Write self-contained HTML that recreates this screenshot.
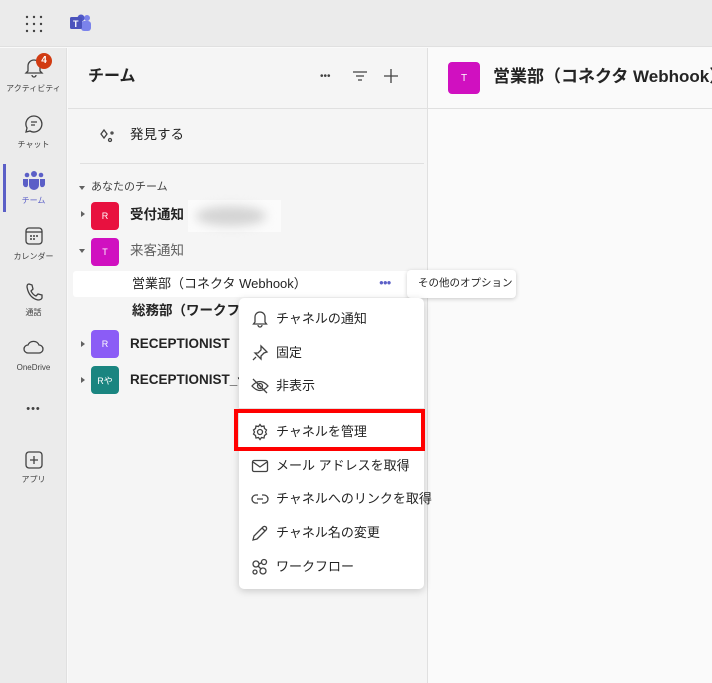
<!DOCTYPE html><html><head><meta charset="utf-8"><style>
*{margin:0;padding:0;box-sizing:border-box}
body{width:712px;height:683px;overflow:hidden;position:relative;background:#fafafa;font-family:"Liberation Sans","Noto Sans CJK JP",sans-serif;color:#242424}
.a{position:absolute}
.t{position:absolute;white-space:nowrap;line-height:1}
svg{position:absolute;fill:none;stroke:#424242;stroke-width:1.3}
.rl{font-size:8px;color:#424242;width:67px;text-align:center;left:0}
.av{position:absolute;width:28px;height:28px;border-radius:4px;color:#fff;font-size:9px;display:flex;align-items:center;justify-content:center;left:91px}
.tri{position:absolute;width:0;height:0}
.mi{position:absolute;left:276px;font-size:13px;white-space:nowrap;line-height:1;color:#242424}
</style></head><body>
<div class="a" style="left:0;top:0;width:712px;height:47px;background:#ebebeb;border-bottom:1px solid #e0e0e0"></div>
<svg style="left:25px;top:15px" width="18" height="18"><g fill="#424242" stroke="none"><circle cx="2" cy="2" r="1.2"/><circle cx="9" cy="2" r="1.2"/><circle cx="16" cy="2" r="1.2"/><circle cx="2" cy="9" r="1.2"/><circle cx="9" cy="9" r="1.2"/><circle cx="16" cy="9" r="1.2"/><circle cx="2" cy="16" r="1.2"/><circle cx="9" cy="16" r="1.2"/><circle cx="16" cy="16" r="1.2"/></g></svg>
<svg style="left:69px;top:14px" width="24" height="20"><g stroke="none"><circle cx="18" cy="4" r="3" fill="#7b83eb"/><rect x="12" y="7" width="10" height="10" rx="3" fill="#7b83eb"/><circle cx="12" cy="4" r="3.5" fill="#5059c9"/><rect x="1" y="3" width="12" height="12" rx="1.5" fill="#4b53bc"/></g><text x="4" y="13" font-size="9" fill="#fff" stroke="none" font-weight="bold" font-family="Liberation Sans">T</text></svg>
<!-- rail -->
<div class="a" style="left:0;top:48px;width:67px;height:635px;background:#ebebeb;border-right:1px solid #e0e0e0"></div>
<svg style="left:24px;top:58px" width="20" height="20"><path d="M4 13V8a6 6 0 0112 0v5l2 2H2z M8 17a2 2 0 004 0"/></svg>
<div class="a" style="left:36px;top:53px;width:16px;height:16px;border-radius:50%;background:#d13b12;color:#fff;font-size:10px;font-weight:bold;text-align:center;line-height:16px">4</div>
<div class="t rl" style="top:85px">アクティビティ</div>
<svg style="left:24px;top:114px" width="20" height="20"><path d="M10 2a8 8 0 11-4 15l-4 1 1-4A8 8 0 0110 2z M7 8h6 M7 11h4"/></svg>
<div class="t rl" style="top:141px">チャット</div>
<div class="a" style="left:3px;top:164px;width:3px;height:48px;background:#5b5fc7"></div>
<svg style="left:23px;top:170px" width="22" height="20"><g fill="#5b5fc7" stroke="none"><circle cx="11" cy="4" r="3"/><circle cx="4" cy="5" r="2.3"/><circle cx="18" cy="5" r="2.3"/><path d="M6 9h10v6a5 5 0 01-10 0z"/><path d="M0 9h5v6a3 3 0 01-1 2 3 3 0 01-4-3z"/><path d="M17 9h5v5a3 3 0 01-4 3 3 3 0 01-1-2z"/></g></svg>
<div class="t rl" style="top:197px;color:#5b5fc7">チーム</div>
<svg style="left:24px;top:226px" width="20" height="20"><rect x="2" y="2" width="16" height="16" rx="3"/><path d="M2 6h16"/><g fill="#424242" stroke="none"><circle cx="7" cy="10" r="1"/><circle cx="10" cy="10" r="1"/><circle cx="13" cy="10" r="1"/><circle cx="7" cy="13" r="1"/><circle cx="10" cy="13" r="1"/></g></svg>
<div class="t rl" style="top:253px">カレンダー</div>
<svg style="left:24px;top:282px" width="20" height="20"><path d="M5 2l3 1 1 4-2 2q2 4 5 5l2-2 4 1 0 3q-1 2-4 2Q5 16 3 5q0-3 2-3z"/></svg>
<div class="t rl" style="top:309px">通話</div>
<svg style="left:23px;top:338px" width="22" height="18"><path d="M5 15a4 4 0 010-8 6 6 0 0111 0 4 4 0 010 8z"/></svg>
<div class="t rl" style="top:364px">OneDrive</div>
<div class="t rl" style="top:404px;font-size:11px;letter-spacing:1px">•••</div>
<svg style="left:24px;top:450px" width="20" height="20"><rect x="2" y="2" width="16" height="16" rx="3"/><path d="M10 6v8M6 10h8"/></svg>
<div class="t rl" style="top:476px">アプリ</div>
<!-- team panel -->
<div class="a" style="left:68px;top:48px;width:360px;height:635px;background:#f5f5f5;border-right:1px solid #e0e0e0"></div>
<div class="t" style="left:88px;top:69px;font-size:16px;font-weight:bold">チーム</div>
<div class="t" style="left:320px;top:72px;font-size:10px;color:#424242">•••</div>
<svg style="left:352px;top:70px" width="16" height="12"><path d="M1 2h14M4 6h8M6 10h4"/></svg>
<svg style="left:383px;top:68px" width="16" height="16"><path d="M8 1v14M1 8h14"/></svg>
<div class="a" style="left:68px;top:108px;width:644px;height:1px;background:#e0e0e0"></div>
<svg style="left:99px;top:128px" width="16" height="16"><path d="M5 2l3 4-3 4-3-4z" /><circle cx="11" cy="12" r="1.5"/><circle cx="13" cy="5" r="1"/></svg>
<div class="t" style="left:130px;top:128px;font-size:13.5px">発見する</div>
<div class="a" style="left:80px;top:163px;width:344px;height:1px;background:#e0e0e0"></div>
<div class="tri" style="left:79px;top:186px;border-left:3px solid transparent;border-right:3px solid transparent;border-top:4px solid #616161"></div>
<div class="t" style="left:91px;top:182px;font-size:11px;color:#424242">あなたのチーム</div>
<div class="tri" style="left:81px;top:211px;border-top:3px solid transparent;border-bottom:3px solid transparent;border-left:4px solid #616161"></div>
<div class="av" style="top:202px;background:#e8113f">R</div>
<div class="t" style="left:130px;top:208px;font-size:13.5px;font-weight:bold">受付通知</div>
<div class="a" style="left:188px;top:200px;width:93px;height:32px;background:#fbfbfb"></div>
<div class="a" style="left:196px;top:206px;width:70px;height:20px;border-radius:50%;background:#d4d4d4;filter:blur(5px)"></div>
<div class="tri" style="left:79px;top:249px;border-left:3px solid transparent;border-right:3px solid transparent;border-top:4px solid #616161"></div>
<div class="av" style="top:238px;background:#d010c0">T</div>
<div class="t" style="left:130px;top:244px;font-size:13.5px;color:#616161">来客通知</div>
<div class="a" style="left:73px;top:271px;width:352px;height:26px;background:#fff;border-radius:3px"></div>
<div class="t" style="left:132px;top:277px;font-size:13px">営業部（コネクタ Webhook）</div>
<div class="t" style="left:379px;top:279px;font-size:8px;color:#5b5fc7;letter-spacing:-1px">●●●</div>
<div class="a" style="left:407px;top:270px;width:109px;height:28px;background:#fff;border-radius:4px;box-shadow:0 1px 4px rgba(0,0,0,.2)"></div>
<div class="t" style="left:418px;top:278px;font-size:10.5px">その他のオプション</div>
<div class="t" style="left:132px;top:304px;font-size:13.5px;font-weight:bold">総務部（ワークフロー</div>
<div class="tri" style="left:81px;top:341px;border-top:3px solid transparent;border-bottom:3px solid transparent;border-left:4px solid #616161"></div>
<div class="av" style="top:330px;background:#8b5cf6">R</div>
<div class="t" style="left:130px;top:337px;font-size:13.5px;font-weight:bold">RECEPTIONIST</div>
<div class="tri" style="left:81px;top:377px;border-top:3px solid transparent;border-bottom:3px solid transparent;border-left:4px solid #616161"></div>
<div class="av" style="top:366px;background:#1a8580">Rや</div>
<div class="t" style="left:130px;top:373px;font-size:13.5px;font-weight:bold">RECEPTIONIST_や</div>
<!-- right header -->
<div class="av" style="left:448px;top:62px;width:32px;height:32px;background:#d010c0;font-size:10px">T</div>
<div class="t" style="left:493px;top:68px;font-size:17px;font-weight:bold">営業部（コネクタ Webhook）</div>
<!-- menu -->
<div class="a" style="left:239px;top:298px;width:185px;height:291px;background:#fff;border-radius:5px;box-shadow:0 2px 8px rgba(0,0,0,.18)"></div>
<svg style="left:251px;top:310px" width="18" height="18"><path d="M4 12V7a5 5 0 0110 0v5l1.5 2h-13z M7 15a2 2 0 004 0"/></svg>
<div class="mi" style="top:312px">チャネルの通知</div>
<svg style="left:251px;top:344px" width="18" height="18"><path d="M10 2l6 6-3 1-3 3 0 3-6-6 3 0 3-3z M5 13l-3 3"/></svg>
<div class="mi" style="top:346px">固定</div>
<svg style="left:251px;top:377px" width="18" height="18"><path d="M1 9q8-9 16 0-8 9-16 0z M2 2l14 14"/><circle cx="9" cy="9" r="2.5"/></svg>
<div class="mi" style="top:379px">非表示</div>
<div class="a" style="left:239px;top:408px;width:185px;height:1px;background:#e0e0e0"></div>
<div class="a" style="left:234px;top:409px;width:191px;height:42px;border:4px solid #f00"></div>
<svg style="left:251px;top:423px" width="18" height="18"><circle cx="9" cy="9" r="2.5"/><path d="M9 1.5l1.5 2 2.5-.5.5 2.5 2 1.5-1 2 1 2-2 1.5-.5 2.5-2.5-.5-1.5 2-1.5-2-2.5.5-.5-2.5-2-1.5 1-2-1-2 2-1.5.5-2.5 2.5.5z"/></svg>
<div class="mi" style="top:425px">チャネルを管理</div>
<svg style="left:251px;top:457px" width="18" height="18"><rect x="1.5" y="3.5" width="15" height="11" rx="1.5"/><path d="M2 5l7 5 7-5"/></svg>
<div class="mi" style="top:459px">メール アドレスを取得</div>
<svg style="left:251px;top:490px" width="18" height="18"><path d="M7 5H5a4 4 0 000 8h2 M11 5h2a4 4 0 010 8h-2 M6 9h6"/></svg>
<div class="mi" style="top:492px">チャネルへのリンクを取得</div>
<svg style="left:251px;top:524px" width="18" height="18"><path d="M2 16l1-4 9-9a2 2 0 013 3l-9 9z M11 4l3 3"/></svg>
<div class="mi" style="top:526px">チャネル名の変更</div>
<svg style="left:251px;top:558px" width="18" height="18"><circle cx="5" cy="6" r="3"/><circle cx="13" cy="4" r="2.5"/><circle cx="12" cy="13" r="3"/><circle cx="4" cy="14" r="2"/><path d="M8 6l3-1.5 M7 8l3 3"/></svg>
<div class="mi" style="top:560px">ワークフロー</div>
</body></html>
